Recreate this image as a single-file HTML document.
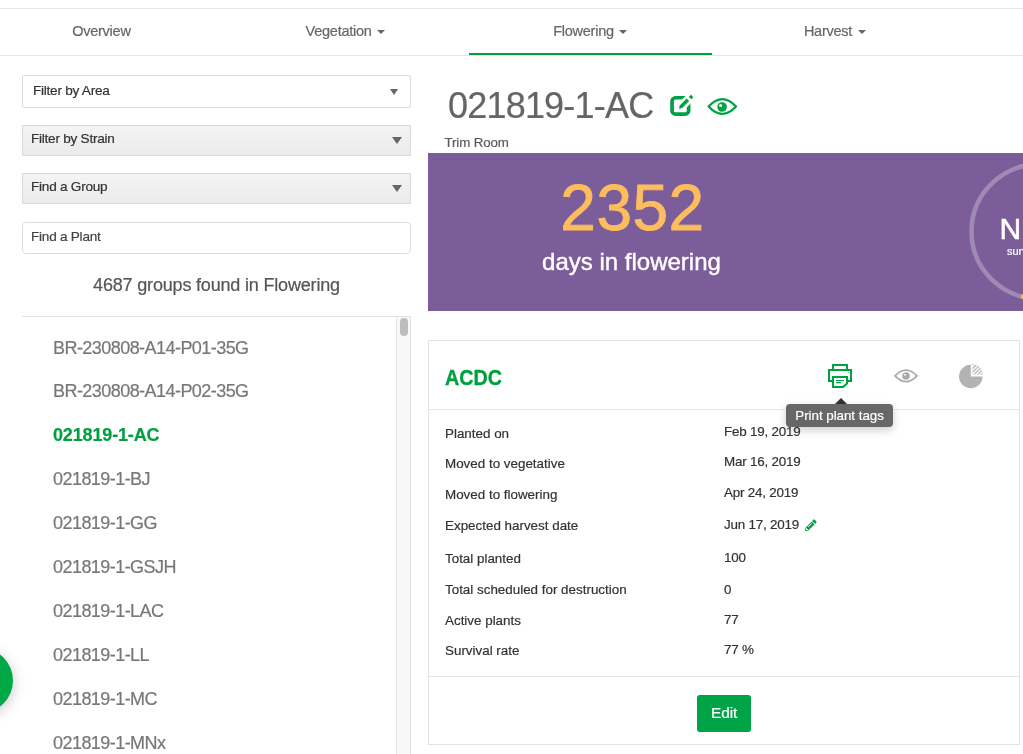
<!DOCTYPE html>
<html><head><meta charset="utf-8">
<style>
*{box-sizing:border-box;margin:0;padding:0}
html,body{width:1023px;height:754px;overflow:hidden;background:#fff;font-family:"Liberation Sans",sans-serif;position:relative}
#root{position:absolute;left:0;top:0;width:1023px;height:754px;overflow:hidden;will-change:transform}
.a{position:absolute}
.tx{position:absolute;line-height:1;white-space:nowrap;-webkit-text-stroke-width:0.2px}
.hl{position:absolute;height:1px}
.caret{position:absolute;top:30px;width:0;height:0;border-left:4px solid transparent;border-right:4px solid transparent;border-top:4px solid #666}
.sel{position:absolute;left:22px;width:389px;border:1px solid #dcdcdc}
.gray{background:linear-gradient(#f4f4f4,#ebebeb);border-color:#d9d9d9}
.arr{position:absolute;width:0;height:0;border-left:5px solid transparent;border-right:5px solid transparent;border-top:7px solid #666}
</style></head><body><div id="root">

<div class="hl" style="left:0;top:8px;width:1023px;background:#e6e6e6"></div>
<div class="tx" id="nOverview" style="left:72.2px;top:24.43px;font-size:14.5px;color:#666;letter-spacing:-0.25px;">Overview</div>
<div class="tx" id="nVeg" style="left:305.6px;top:24.43px;font-size:14.5px;color:#666;letter-spacing:-0.25px;">Vegetation</div>
<i class="caret" style="left:377px"></i>
<div class="tx" id="nFlow" style="left:553.2px;top:24.43px;font-size:14.5px;color:#666;letter-spacing:-0.25px;">Flowering</div>
<i class="caret" style="left:619px"></i>
<div class="tx" id="nHarv" style="left:803.9px;top:24.43px;font-size:14.5px;color:#666;letter-spacing:-0.25px;">Harvest</div>
<i class="caret" style="left:858px"></i>
<div class="hl" style="left:0;top:55px;width:1023px;background:#e6e6e6"></div>
<div class="a" style="left:469px;top:53px;width:243px;height:2px;background:#009e3d"></div>
<div class="sel" style="top:75px;height:33px;border-radius:2px"></div>
<div class="tx" id="sArea" style="left:33px;top:84.09px;font-size:13.6px;color:#333;letter-spacing:-0.25px;">Filter by Area</div>
<i class="arr" style="left:390px;top:89px;border-left-width:4.5px;border-right-width:4.5px;border-top-width:6.5px"></i>
<div class="sel gray" style="top:125px;height:31px"></div>
<div class="tx" id="sStrain" style="left:31px;top:132.29px;font-size:13.6px;color:#333;letter-spacing:-0.25px;">Filter by Strain</div>
<i class="arr" style="left:392px;top:137px"></i>
<div class="sel gray" style="top:173px;height:31px"></div>
<div class="tx" id="sGroup" style="left:31px;top:180.49px;font-size:13.6px;color:#333;letter-spacing:-0.25px;">Find a Group</div>
<i class="arr" style="left:392px;top:185px"></i>
<div class="sel" style="top:222px;height:32px;border-radius:4px"></div>
<div class="tx" id="sPlant" style="left:31px;top:230.09px;font-size:13.6px;color:#444;letter-spacing:-0.25px;">Find a Plant</div>
<div class="tx" id="found" style="left:22px;top:275.76px;font-size:18px;color:#555;letter-spacing:-0.18px;width:389px;text-align:center;">4687 groups found in Flowering</div>
<div class="hl" style="left:22px;top:316px;width:389px;background:#e3e3e3"></div>
<div class="a" style="left:396px;top:317px;width:15px;height:437px;background:#f8f8f8;border-left:1px solid #e3e3e3;border-right:1px solid #e3e3e3"></div>
<div class="a" style="left:400px;top:318px;width:8px;height:18px;background:#bdbdbd;border-radius:4px"></div>
<div class="tx" id="i0" style="left:53px;top:338.76px;font-size:18px;color:#777;letter-spacing:-0.55px;">BR-230808-A14-P01-35G</div>
<div class="tx" id="i1" style="left:53px;top:381.96px;font-size:18px;color:#777;letter-spacing:-0.55px;">BR-230808-A14-P02-35G</div>
<div class="tx" id="i2" style="left:53px;top:425.96px;font-size:18px;color:#00a040;letter-spacing:-0.15px;font-weight:bold;">021819-1-AC</div>
<div class="tx" id="i3" style="left:53px;top:469.96px;font-size:18px;color:#777;letter-spacing:-0.55px;">021819-1-BJ</div>
<div class="tx" id="i4" style="left:53px;top:513.96px;font-size:18px;color:#777;letter-spacing:-0.55px;">021819-1-GG</div>
<div class="tx" id="i5" style="left:53px;top:557.96px;font-size:18px;color:#777;letter-spacing:-0.55px;">021819-1-GSJH</div>
<div class="tx" id="i6" style="left:53px;top:601.96px;font-size:18px;color:#777;letter-spacing:-0.55px;">021819-1-LAC</div>
<div class="tx" id="i7" style="left:53px;top:645.96px;font-size:18px;color:#777;letter-spacing:-0.55px;">021819-1-LL</div>
<div class="tx" id="i8" style="left:53px;top:689.96px;font-size:18px;color:#777;letter-spacing:-0.55px;">021819-1-MC</div>
<div class="tx" id="i9" style="left:53px;top:733.96px;font-size:18px;color:#777;letter-spacing:-0.55px;">021819-1-MNx</div>
<div class="a" style="left:-52px;top:647.5px;width:65px;height:65px;border-radius:50%;background:#00a846;box-shadow:0 3px 14px rgba(0,0,0,.22)"></div>
<div class="tx" id="title" style="left:448px;top:87.83px;font-size:36px;color:#656565;letter-spacing:-0.8px;">021819-1-AC</div>
<div class="tx" id="trim" style="left:444.5px;top:136.24px;font-size:13.3px;color:#5a5a5a;letter-spacing:-0.12px;">Trim Room</div>
<div class="a" style="left:428px;top:153px;width:595px;height:158px;background:#7b5d9a;overflow:hidden">
  <svg class="a" style="left:0;top:0" width="595" height="158" viewBox="428 153 595 158">
    <circle cx="1038.5" cy="231.5" r="67" fill="none" stroke="rgba(255,255,255,0.28)" stroke-width="4.5"/>
    <path d="M1039 298.5 A67 67 0 0 1 1021.2 296.2" fill="none" stroke="#fdb95c" stroke-width="4.5"/>
  </svg>
  <div class="tx" style="left:571.5px;top:61px;font-size:30px;color:#fff;-webkit-text-stroke-width:0.6px">N</div>
  <div class="tx" style="left:579px;top:93px;font-size:11px;color:#fff">survival rate</div>
</div>
<div class="tx" id="big" style="left:432.5px;top:175.82px;font-size:64px;color:#fdbd5e;letter-spacing:0.5px;width:400px;text-align:center;-webkit-text-stroke-width:0.9px;">2352</div>
<div class="tx" id="days" style="left:431.5px;top:250.18px;font-size:24px;color:#fff;width:400px;text-align:center;-webkit-text-stroke-width:0.4px;">days in flowering</div>
<div class="a" style="left:428px;top:340px;width:592px;height:405px;border:1px solid #e3e3e3"></div>
<div class="hl" style="left:429px;top:409px;width:590px;background:#e6e6e6"></div>
<div class="hl" style="left:429px;top:676px;width:590px;background:#e6e6e6"></div>
<div class="tx" id="acdc" style="left:444.5px;top:365.90px;font-size:22.8px;color:#00a040;font-weight:bold;transform:scaleX(0.865);transform-origin:0 0;-webkit-text-stroke-width:0.4px;">ACDC</div>
<div class="tx" id="l0" style="left:445px;top:426.66px;font-size:13.4px;color:#333;">Planted on</div>
<div class="tx" id="l1" style="left:445px;top:456.56px;font-size:13.4px;color:#333;">Moved to vegetative</div>
<div class="tx" id="l2" style="left:445px;top:487.86px;font-size:13.4px;color:#333;">Moved to flowering</div>
<div class="tx" id="l3" style="left:445px;top:518.86px;font-size:13.4px;color:#333;">Expected harvest date</div>
<div class="tx" id="l4" style="left:445px;top:551.66px;font-size:13.4px;color:#333;">Total planted</div>
<div class="tx" id="l5" style="left:445px;top:583.46px;font-size:13.4px;color:#333;">Total scheduled for destruction</div>
<div class="tx" id="l6" style="left:445px;top:613.66px;font-size:13.4px;color:#333;">Active plants</div>
<div class="tx" id="l7" style="left:445px;top:643.66px;font-size:13.4px;color:#333;">Survival rate</div>
<div class="tx" id="v0" style="left:724px;top:424.56px;font-size:13.4px;color:#333;letter-spacing:-0.2px;">Feb 19, 2019</div>
<div class="tx" id="v1" style="left:724px;top:454.56px;font-size:13.4px;color:#333;letter-spacing:-0.2px;">Mar 16, 2019</div>
<div class="tx" id="v2" style="left:724px;top:485.56px;font-size:13.4px;color:#333;letter-spacing:-0.2px;">Apr 24, 2019</div>
<div class="tx" id="v3" style="left:724px;top:518.36px;font-size:13.4px;color:#333;letter-spacing:-0.2px;">Jun 17, 2019</div>
<div class="tx" id="v4" style="left:724px;top:551.06px;font-size:13.4px;color:#333;letter-spacing:-0.2px;">100</div>
<div class="tx" id="v5" style="left:724px;top:582.56px;font-size:13.4px;color:#333;letter-spacing:-0.2px;">0</div>
<div class="tx" id="v6" style="left:724px;top:613.26px;font-size:13.4px;color:#333;letter-spacing:-0.2px;">77</div>
<div class="tx" id="v7" style="left:724px;top:643.46px;font-size:13.4px;color:#333;letter-spacing:-0.2px;">77 %</div>
<!-- icons -->
<svg class="a" style="left:0;top:0" width="1023" height="754" viewBox="0 0 1023 754">
  <rect x="672.05" y="97.75" width="16.6" height="16.3" rx="3.4" fill="none" stroke="#00a142" stroke-width="3.7"/>
  <path d="M681 106.8 L697 90.8" stroke="#fff" stroke-width="8.8"/>
  <path d="M679.0 108.7 L682.25 107.99 L689.18 101.06 L686.64 98.52 L679.71 105.45 Z" fill="#00a142"/>
  <path d="M691.3 99.3 L693.4 97.2 L690.9 94.7 L688.8 96.8 Z" fill="#00a142"/>
  <path d="M708.6 106.5 Q722.3 91.8 736 106.5 Q722.3 121.2 708.6 106.5 Z" fill="none" stroke="#00a142" stroke-width="2.3" stroke-linejoin="round"/>
  <circle cx="722.1" cy="107" r="4.8" fill="#00a142"/>
  <circle cx="720.6" cy="105.4" r="1.5" fill="#fff"/>
  <!-- printer -->
  <g fill="none" stroke="#00a142" stroke-width="2">
    <rect x="833" y="365" width="14" height="5"/>
    <rect x="829" y="370" width="22" height="11"/>
    <path d="M833 377 H847 V383.5 L843 387 H833 Z" fill="#fff"/>
    <path d="M836 380.5 H844 M836 382.7 H841" stroke-width="1.2"/>
  </g>
  <rect x="848" y="372" width="1" height="1" fill="#00a142" opacity=".6"/>
  <!-- gray eye -->
  <path d="M895 375.8 Q906 364.3 917 375.8 Q906 387.3 895 375.8 Z" fill="none" stroke="#aaaaaa" stroke-width="1.8"/>
  <circle cx="906" cy="376" r="3.8" fill="#aaaaaa"/>
  <circle cx="905" cy="374.8" r="1.1" fill="#e8e8e8"/>
  <!-- pie -->
  <defs>
    <pattern id="hatch" patternUnits="userSpaceOnUse" width="2.7" height="2.7" patternTransform="rotate(45)">
      <rect x="0" y="0" width="1.1" height="2.7" fill="#a8a8a8"/>
    </pattern>
  </defs>
  <path d="M970.8 364.7 A11.8 11.8 0 1 0 982.6 376.5 H970.8 Z" fill="#b3b3b3"/>
  <path d="M972.4 364 A10.6 10.6 0 0 1 983 374.6 H972.4 Z" fill="url(#hatch)"/>
  <!-- small pencil -->
  <g transform="translate(805 519.5) scale(0.0225)">
    <path fill="#00a142" d="M497.9 142.1l-46.1 46.1c-4.7 4.7-12.3 4.7-17 0l-111-111c-4.7-4.7-4.7-12.3 0-17l46.1-46.1c18.7-18.7 49.1-18.7 67.9 0l60.1 60.1c18.8 18.7 18.8 49.1 0 67.9zM284.2 99.8L21.6 362.4.4 483.9c-2.9 16.4 11.4 30.6 27.8 27.8l121.5-21.3 262.6-262.6c4.7-4.7 4.7-12.3 0-17l-111-111c-4.8-4.7-12.4-4.7-17.1 0zM124.1 339.9c-5.5-5.5-5.5-14.3 0-19.8l154-154c5.5-5.5 14.3-5.5 19.8 0s5.5 14.3 0 19.8l-154 154c-5.5 5.5-14.3 5.5-19.8 0zM88 424h48v36.3l-64.5 11.3-31.1-31.1L51.7 376H88v48z"/>
  </g>
</svg>
<div class="a" style="left:697px;top:695px;width:54px;height:37px;background:#00a346;border-radius:3px"></div>
<div class="tx" id="edit" style="left:711px;top:705.05px;font-size:15.3px;color:#fff;">Edit</div>
<div class="a" style="left:834.5px;top:398px;width:0;height:0;border-left:6px solid transparent;border-right:6px solid transparent;border-bottom:6px solid #333"></div>
<div class="a" style="left:786px;top:404px;width:107px;height:23px;background:#676767;border-radius:4px;box-shadow:0 3px 10px rgba(0,0,0,.2)"></div>
<div class="tx" id="tip" style="left:795.3px;top:408.96px;font-size:13.4px;color:#fff;letter-spacing:-0.05px;">Print plant tags</div>
</div></body></html>
